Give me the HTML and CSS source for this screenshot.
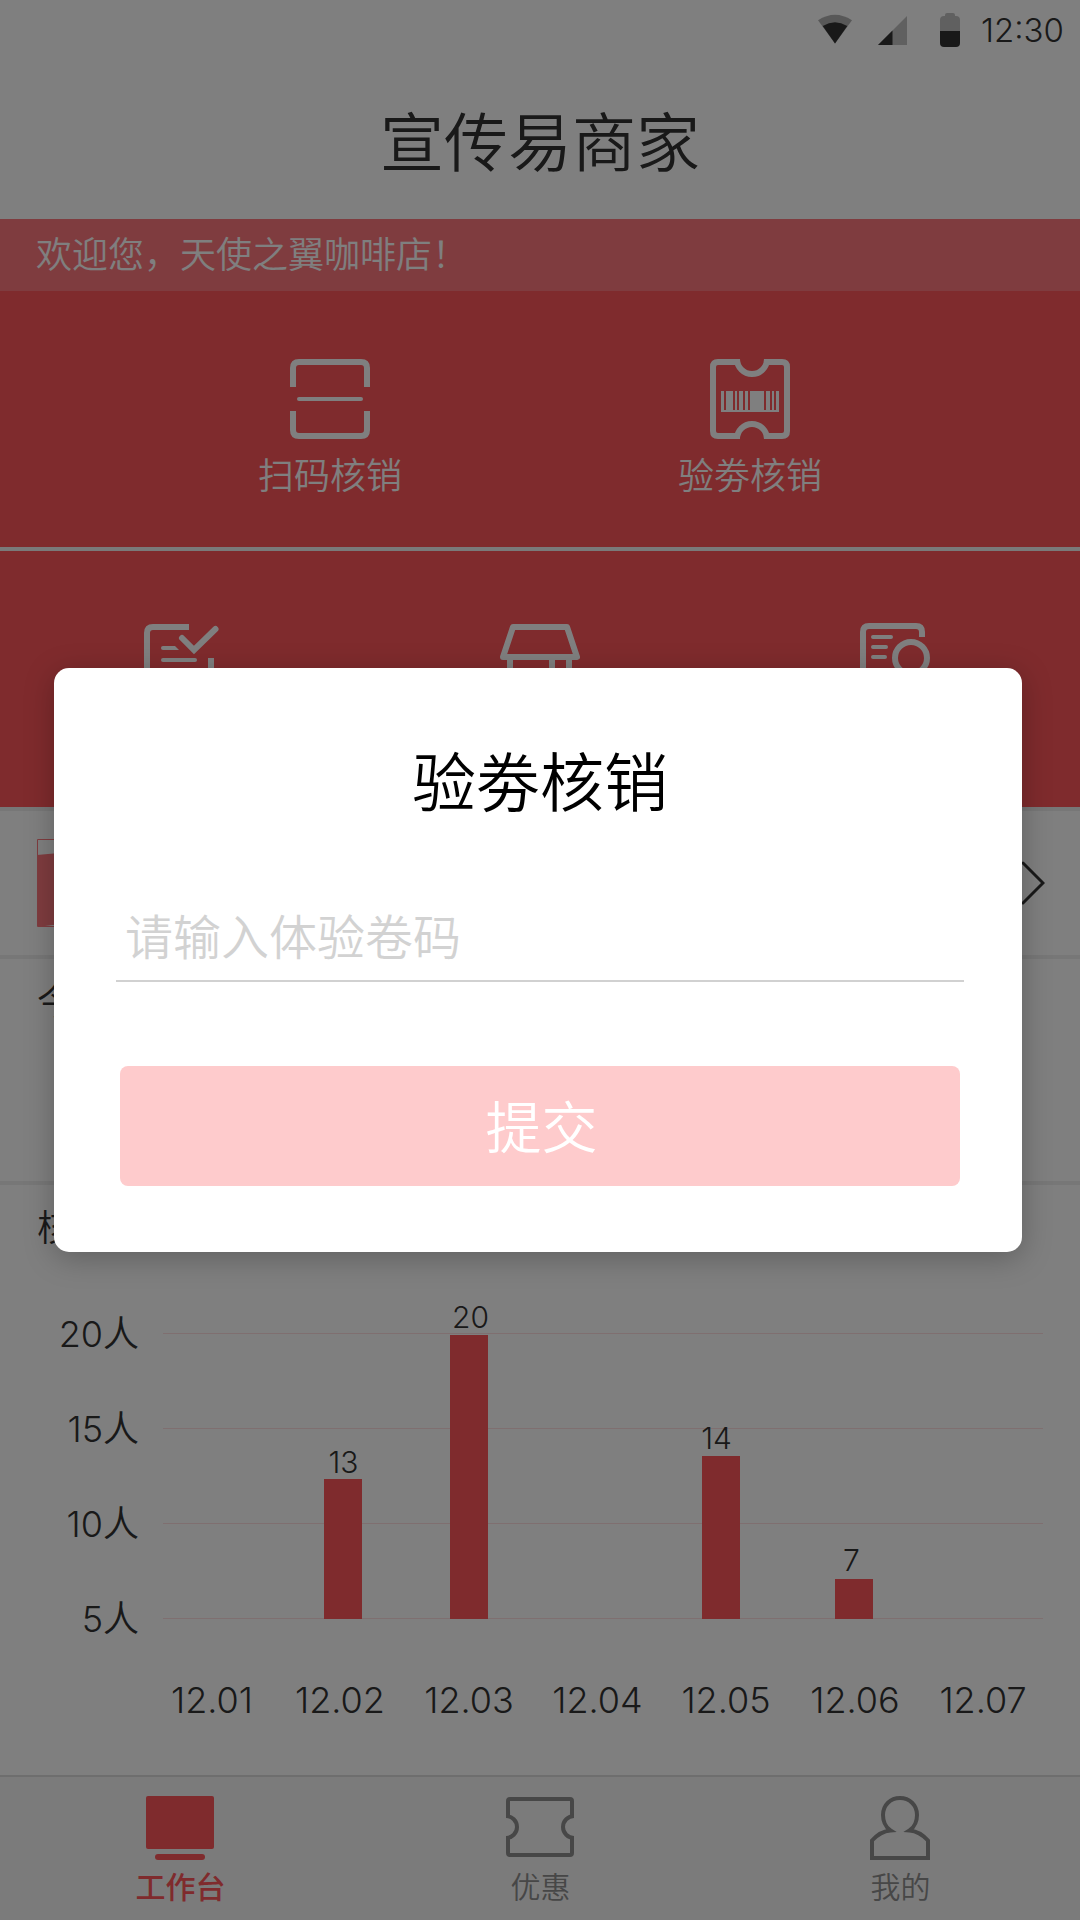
FILE: index.html
```html
<!DOCTYPE html>
<html lang="zh-CN">
<head>
<meta charset="utf-8">
<title>宣传易商家</title>
<link rel="stylesheet" href="styles.css">
</head>
<body>
<div class="screen">
  <header class="header">
    <div class="status">
      <svg class="status-wifi" width="34" height="30" viewBox="0 0 34 30">
        <path d="M0 6.2Q17-4.8 34 6.2L17 29.5Z" fill="#333" opacity=".38"/>
        <path d="M4.7 12Q17 4.6 29.3 12L17 29.5Z" fill="#333"/>
      </svg>
      <svg class="status-signal" width="29" height="29" viewBox="0 0 29 29">
        <path d="M29 0V29H0Z" fill="#333" opacity=".3"/>
        <path d="M14.5 14.5V29H0Z" fill="#333"/>
      </svg>
      <svg class="status-battery" width="20" height="34" viewBox="0 0 20 34">
        <path d="M5 3V2q0-2 2-2h6q2 0 2 2v1h1q4 0 4 4v11H0V7q0-4 4-4Z" fill="#333" opacity=".3"/>
        <path d="M0 18H20V30q0 4-4 4H4q-4 0-4-4Z" fill="#333"/>
      </svg>
      <span class="status-time">12:30</span>
    </div>
    <h1 class="title">宣传易商家</h1>
  </header>

  <p class="welcome">欢迎您，天使之翼咖啡店！</p>

  <nav class="actions actions-two">
    <a class="action">
      <svg width="80" height="80" viewBox="0 0 80 80" fill="none" stroke="#fff" stroke-width="6">
        <path d="M3 28V9q0-6 6-6H71q6 0 6 6V28M3 52V71q0 6 6 6H71q6 0 6-6V52"/>
        <path d="M9 40H71" stroke-width="4" stroke-linecap="round"/>
      </svg>
      <span>扫码核销</span>
    </a>
    <a class="action">
      <svg width="80" height="80" viewBox="0 0 80 80" fill="none" stroke="#fff" stroke-width="6">
        <path d="M30 3H8Q3 3 3 8V72Q3 77 8 77H30M54 3H72Q77 3 77 8V72Q77 77 72 77H54"/>
        <path d="M27 0A15 15 0 0 0 57 0M27 80A15 15 0 0 1 57 80"/>
        <path d="M11 32h3v19h2V32h7v19h2V32h2v19h2V32h4v19h2V32h3v19h2V32h14v19h2V32h4v19h2V32h2v19h2V32h3v21H11Z" fill="#fff" stroke="none"/>
      </svg>
      <span>验劵核销</span>
    </a>
  </nav>

  <nav class="actions actions-three">
    <a class="action">
      <svg width="80" height="80" viewBox="0 0 80 80" fill="none" stroke="#fff" stroke-width="6">
        <path d="M49 3H13q-6 0-6 6V71q0 6 6 6H65q6 0 6-6V34"/>
        <path d="M42 14 54 26 75.500 5" stroke-linecap="round"/>
        <path d="M23 36H55" stroke-width="4" stroke-linecap="round"/>
        <path d="M23 22H35L39 26H23Q21 26 21 24T23 22Z" fill="#fff" stroke="none"/>
      </svg>
    </a>
    <a class="action">
      <svg width="80" height="80" viewBox="0 0 80 80" fill="none" stroke="#fff" stroke-width="6" stroke-linejoin="round">
        <path d="M13 3H67L77 33H3ZM10 35V77H69V35M52 35V77"/>
      </svg>
    </a>
    <a class="action">
      <svg width="80" height="80" viewBox="0 0 80 80" fill="none" stroke="#fff" stroke-width="6">
        <path d="M62 14V9q0-6-6-6H9Q3 3 3 9V71q0 6 6 6H56q6 0 6-6"/>
        <circle cx="51" cy="35" r="16"/>
        <path d="M13 14H31M13 24H26M13 34H25" stroke-width="4" stroke-linecap="round"/>
      </svg>
    </a>
  </nav>

  <section class="promo">
    <svg width="88" height="88" viewBox="0 0 88 88">
      <path d="M.5.5H87.500V87.500H.5Z" fill="#fff" stroke="#ff787e"/>
      <path d="M0 16 88 8V86L8 86 16 87H0Z" fill="#ff787e"/>
    </svg>
    <svg width="26" height="44" viewBox="0 0 26 44" fill="none" stroke="#333" stroke-width="3" stroke-linecap="round">
      <path d="M4 2 24 22 4 42"/>
    </svg>
  </section>

  <section class="today"><h2 class="heading">今日</h2></section>

  <section class="stats">
    <h2 class="heading">核销</h2>
    <svg class="chart" width="1080" height="460" viewBox="0 1280 1080 460">
      <g class="grid">
        <path d="M163 1333.500H1043M163 1428.500H1043M163 1523.500H1043M163 1618.500H1043"/>
      </g>
      <g class="bars">
        <rect x="324" y="1479" width="38" height="140"/>
        <rect x="450" y="1335" width="38" height="284"/>
        <rect x="702" y="1456" width="38" height="163"/>
        <rect x="835" y="1579" width="38" height="40"/>
      </g>
      <g class="values">
        <text x="343.500" y="1473">13</text>
        <text x="470.500" y="1328">20</text>
        <text x="716.500" y="1449">14</text>
        <text x="851.500" y="1571">7</text>
      </g>
      <g class="y-axis">
        <text x="139" y="1346.500">20人</text>
        <text x="139" y="1441.500">15人</text>
        <text x="139" y="1536.500">10人</text>
        <text x="139" y="1631.500">5人</text>
      </g>
      <g class="x-axis">
        <text x="212" y="1713">12.01</text>
        <text x="340" y="1713">12.02</text>
        <text x="469" y="1713">12.03</text>
        <text x="597.500" y="1713">12.04</text>
        <text x="726" y="1713">12.05</text>
        <text x="855" y="1713">12.06</text>
        <text x="983" y="1713">12.07</text>
      </g>
    </svg>
  </section>

  <nav class="tabs">
    <a class="tab tab-active">
      <svg width="68" height="64" viewBox="0 0 68 64" fill="#ff565a">
        <rect width="68" height="53" rx="2"/><rect x="9" y="58" width="50" height="6" rx="3"/>
      </svg>
      <span>工作台</span>
    </a>
    <a class="tab">
      <svg width="68" height="64" viewBox="0 0 68 64" fill="none" stroke="#8e8e8e" stroke-width="4">
        <path d="M2 22V5Q2 3 4 3H64Q66 3 66 5V22M66 40V57Q66 59 64 59H4Q2 59 2 57V40"/>
        <path d="M0 20A11 11 0 0 1 0 42M68 20A11 11 0 0 0 68 42"/>
      </svg>
      <span>优惠</span>
    </a>
    <a class="tab">
      <svg width="68" height="64" viewBox="0 0 68 64" fill="none" stroke="#8e8e8e" stroke-width="4" stroke-miterlimit="8">
        <path d="M24.500 34.500C19 31 17 24 17 19C17 9 24.500 2 34 2S51 9 51 19C51 24 49 31 43.500 34.500C51 35 56 38 62 44.500V62H6V44.500C12 38 17 35 24.500 34.500Z"/>
      </svg>
      <span>我的</span>
    </a>
  </nav>

  <div class="mask"></div>

  <form class="dialog">
    <h2 class="dialog-title">验劵核销</h2>
    <div class="field">请输入体验卷码</div>
    <div class="submit">提交</div>
  </form>
</div>
</body>
</html>
```
FILE: styles.css
```css
* { box-sizing: border-box; }
body { margin: 0; }
h1, h2, p { margin: 0; font-weight: inherit; }
svg { display: block; flex: none; }

.screen {
  position: relative;
  display: flex;
  flex-direction: column;
  width: 1080px;
  height: 1920px;
  overflow: hidden;
  background: #fff;
  color: #333;
  font-family: "Noto Sans CJK SC", sans-serif;
  font-size: 36px;
  font-weight: 350;
  line-height: 1;
}

.header { height: 219px; }
.status {
  display: flex;
  align-items: flex-start;
  justify-content: flex-end;
  height: 60px;
  padding-right: 16px;
}
.status-wifi { margin: 14px 26px 0 0; }
.status-signal { margin: 16px 33px 0 0; }
.status-battery { margin: 13px 21px 0 0; }
.status-time {
  width: 83px;
  padding-top: 13px;
  font: 350 33px/34px Inter, sans-serif;
  white-space: nowrap;
}
.title {
  padding-top: 46px;
  font-size: 64px;
  line-height: 64px;
  text-align: center;
}

.welcome {
  height: 72px;
  padding-left: 36px;
  background: #ff787e;
  color: #fff;
  line-height: 67px;
}

.actions {
  display: grid;
  height: 256px;
  background: #ff565a;
  color: #fff;
}
.actions-two { grid-template-columns: 420px 420px; justify-content: center; }
.actions-three {
  grid-template-columns: repeat(3, 1fr);
  height: 260px;
  border-top: 4px solid #f4f4f4;
}
.action {
  display: flex;
  flex-direction: column;
  align-items: center;
  gap: 16px;
  padding-top: 68px;
}
.actions-three .action { padding-top: 73px; }
.actions-three .action:last-child { padding-top: 72px; }

.promo {
  display: flex;
  justify-content: space-between;
  align-items: center;
  height: 148px;
  padding: 0 35px 0 37px;
  border-top: 4px solid #eee;
}
.today { height: 226px; padding: 22px 37px; border-top: 4px solid #eee; }
.stats { height: 594px; padding-top: 22px; border-top: 4px solid #eee; }
.stats .heading { padding-left: 37px; }
.heading { font-size: 36px; line-height: 36px; }

.chart { margin-top: 37px; }
.grid { stroke: #ffdfe0; }
.bars { fill: #ff565a; }
.chart text { font-family: Inter, "Noto Sans CJK SC", sans-serif; font-weight: 350; fill: #333; }
.values { font-size: 30px; text-anchor: middle; }
.y-axis { font-size: 36px; text-anchor: end; }
.x-axis { font-size: 36px; text-anchor: middle; }

.tabs {
  display: grid;
  grid-template-columns: repeat(3, 1fr);
  height: 145px;
  background: #f7f7f7;
  border-top: 2px solid #ddd;
}
.tab {
  display: flex;
  flex-direction: column;
  align-items: center;
  gap: 10px;
  padding-top: 19px;
  color: #8e8e8e;
  font-size: 30px;
  line-height: 30px;
}
.tab span { padding-left: 1px; }
.tab-active { color: #ff565a; font-weight: 500; }

.mask { position: absolute; inset: 0; background: rgba(0, 0, 0, .5); }

.dialog {
  position: absolute;
  left: 54px;
  top: 668px;
  width: 968px;
  height: 584px;
  padding: 78px 58px 0 62px;
  border-radius: 15px;
  background: #fff;
  box-shadow: 0 6px 30px rgba(0, 0, 0, .25);
}
.dialog-title {
  color: #000;
  font-size: 64px;
  line-height: 64px;
  text-align: center;
}
.field {
  height: 89px;
  margin-top: 83px;
  padding-left: 9px;
  border-bottom: 2px solid #d1d1d1;
  color: #d2d2d2;
  font-size: 48px;
  line-height: 82px;
}
.submit {
  height: 120px;
  margin: 84px 4px 0;
  padding-left: 3px;
  border-radius: 8px;
  background: #fecbcc;
  color: #fff;
  font-size: 56px;
  line-height: 115px;
  text-align: center;
}
```
